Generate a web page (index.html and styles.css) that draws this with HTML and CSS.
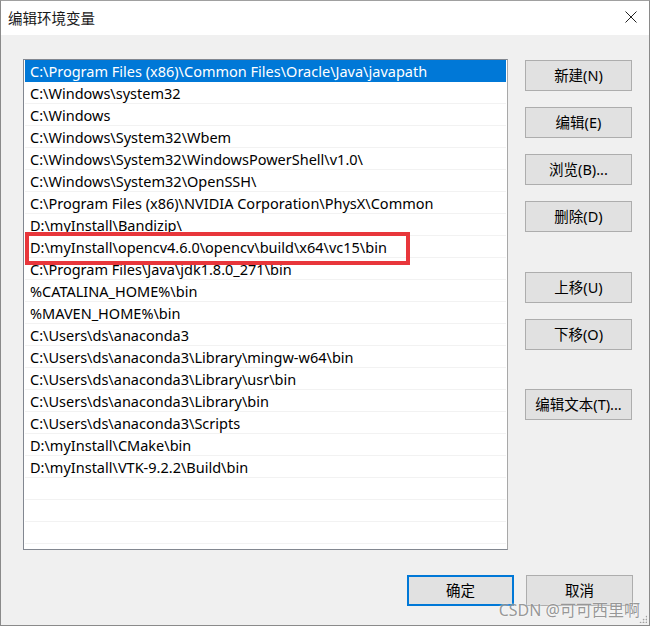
FILE: index.html
```html
<!DOCTYPE html>
<html lang="zh-CN">
<head>
<meta charset="utf-8">
<title>编辑环境变量</title>
<link rel="stylesheet" href="styles.css">
</head>
<body>
<div class="window">
  <div class="titlebar">
    <span class="title">编辑环境变量</span>
    <span class="close">
      <svg width="12" height="12" viewBox="0 0 12 12"><path d="M0.5 0.5L11.5 11.5M11.5 0.5L0.5 11.5" stroke="#222" stroke-width="1" fill="none"/></svg>
    </span>
  </div>
  <div class="content">
    <div class="main">
      <div class="list">
        <div class="row selected">C:\Program Files (x86)\Common Files\Oracle\Java\javapath</div>
        <div class="row">C:\Windows\system32</div>
        <div class="row">C:\Windows</div>
        <div class="row">C:\Windows\System32\Wbem</div>
        <div class="row">C:\Windows\System32\WindowsPowerShell\v1.0\</div>
        <div class="row">C:\Windows\System32\OpenSSH\</div>
        <div class="row">C:\Program Files (x86)\NVIDIA Corporation\PhysX\Common</div>
        <div class="row">D:\myInstall\Bandizip\</div>
        <div class="row">D:\myInstall\opencv4.6.0\opencv\build\x64\vc15\bin</div>
        <div class="row">C:\Program Files\Java\jdk1.8.0_271\bin</div>
        <div class="row">%CATALINA_HOME%\bin</div>
        <div class="row">%MAVEN_HOME%\bin</div>
        <div class="row">C:\Users\ds\anaconda3</div>
        <div class="row">C:\Users\ds\anaconda3\Library\mingw-w64\bin</div>
        <div class="row">C:\Users\ds\anaconda3\Library\usr\bin</div>
        <div class="row">C:\Users\ds\anaconda3\Library\bin</div>
        <div class="row">C:\Users\ds\anaconda3\Scripts</div>
        <div class="row">D:\myInstall\CMake\bin</div>
        <div class="row">D:\myInstall\VTK-9.2.2\Build\bin</div>
        <div class="row"></div>
        <div class="row"></div>
        <div class="row"></div>
      </div>
      <div class="side">
        <button class="btn">新建(N)</button>
        <button class="btn gap16">编辑(E)</button>
        <button class="btn gap16">浏览(B)...</button>
        <button class="btn gap16">删除(D)</button>
        <button class="btn gap40">上移(U)</button>
        <button class="btn gap16">下移(O)</button>
        <button class="btn gap39">编辑文本(T)...</button>
      </div>
    </div>
    <div class="footer">
      <button class="btn primary">确定</button>
      <button class="btn">取消</button>
    </div>
  </div>
  <div class="highlight"></div>
  <div class="watermark">CSDN @可可西里啊</div>
  <div class="grip"></div>
</div>
</body>
</html>
```
FILE: styles.css
```css
* { box-sizing: border-box; }
html, body { margin: 0; padding: 0; }
body {
  font-family: "Noto Sans", "Noto Sans CJK SC", sans-serif;
  background: #fff;
}
.window {
  position: relative;
  width: 650px;
  height: 626px;
  border: 1px solid #8a8a8a;
  border-top-color: #a0a0a0;
  background: #f0f0f0;
  display: flex;
  flex-direction: column;
}
.titlebar {
  height: 34px;
  background: #fff;
  display: flex;
  align-items: center;
  justify-content: space-between;
  padding: 0 12px 0 7px;
}
.title {
  font-family: "Noto Sans CJK SC", sans-serif;
  font-size: 14.5px;
  color: #1a1a1a;
  padding-bottom: 2px;
}
.close { display: flex; padding-bottom: 2px; }
.content {
  flex: 1;
  padding: 24px 16px 0 22px;
  display: flex;
  flex-direction: column;
}
.main {
  display: flex;
  gap: 17px;
}
.list {
  width: 485px;
  height: 491px;
  background: #fff;
  border: 1px solid #828790;
  border-right-color: #a8a8a8;
  padding: 0 1px;
  overflow: hidden;
}
.row {
  height: 22px;
  border-bottom: 1px solid #f2f2f2;
  padding: 1px 0 0 5px;
  font-size: 14.5px;
  line-height: 21px;
  color: #000;
  white-space: nowrap;
}
.row.selected {
  background: #0078d7;
  color: #fff;
  border-bottom-color: #0078d7;
}
.side {
  display: flex;
  flex-direction: column;
  padding-top: 1px;
}
.btn {
  width: 107px;
  height: 31px;
  background: #e1e1e1;
  border: 1px solid #adadad;
  font-family: "Noto Sans", "Noto Sans CJK SC", sans-serif;
  font-size: 14.5px;
  color: #000;
  padding: 0;
  line-height: 1;
}
.gap16 { margin-top: 16px; }
.gap40 { margin-top: 40px; }
.gap39 { margin-top: 39px; }
.footer {
  display: flex;
  justify-content: flex-end;
  gap: 12px;
  margin-top: 25px;
}
.btn.primary {
  border: 2px solid #0078d7;
}
.highlight {
  position: absolute;
  left: 24px;
  top: 231px;
  width: 385px;
  height: 33px;
  border: 4px solid #e8363b;
}
.watermark {
  position: absolute;
  right: 9px;
  bottom: 5px;
  font-family: "Noto Sans", "Noto Sans CJK SC", sans-serif;
  font-size: 16px;
  color: rgba(125, 125, 125, 0.8);
  text-shadow: 0 0 2px #fff;
  line-height: 20px;
}
.grip {
  position: absolute;
  right: 2px;
  bottom: 2px;
  width: 8px;
  height: 8px;
  background-image: radial-gradient(circle, #a0a0a0 0.8px, transparent 1.1px);
  background-size: 3px 3px;
  clip-path: polygon(100% 0, 100% 100%, 0 100%);
}
```
